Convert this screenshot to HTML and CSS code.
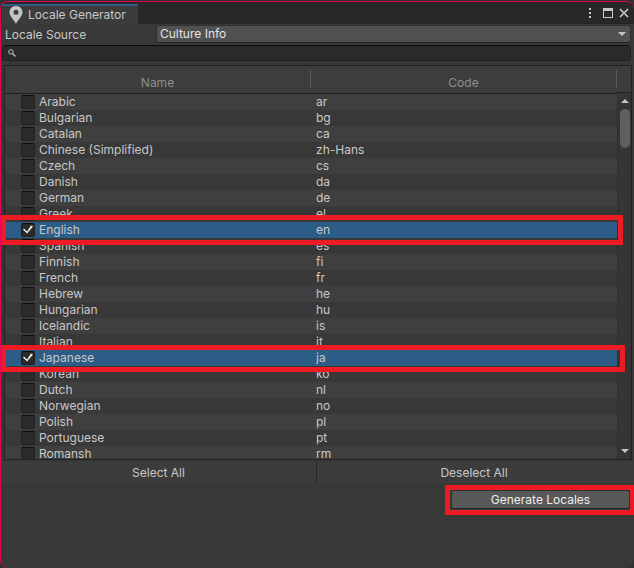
FILE: index.html
```html
<!DOCTYPE html>
<html lang="en">
<head>
<meta charset="utf-8">
<title>Locale Generator</title>
<link rel="stylesheet" href="styles.css">
</head>
<body>
<main class="window">
  <header class="titlebar">
    <h1 class="tab">
      <svg class="pin" width="14" height="18" viewBox="0 0 14 18" aria-hidden="true"><path fill="#c4c4c4" fill-rule="evenodd" d="M7 0C3.200 0 .5 2.800.5 6.300.5 10.500 5 13.500 7 18c2-4.500 6.500-7.500 6.500-11.700C13.500 2.800 10.800 0 7 0zM7 3.800a2.500 2.500 0 1 1 0 5 2.500 2.500 0 0 1 0-5z"/></svg>
      Locale Generator
    </h1>
    <div class="controls">
      <button aria-label="Menu"><svg width="4" height="12" viewBox="0 0 4 12"><path fill="#c8c8c8" d="M1 1h2v2H1zM1 5h2v2H1zM1 9h2v2H1z"/></svg></button>
      <button aria-label="Maximize"><svg width="10" height="10" viewBox="0 0 10 10"><path fill="#c8c8c8" fill-rule="evenodd" d="M0 0h10v10H0zM1 3v6h8V3z"/></svg></button>
      <button aria-label="Close"><svg width="10" height="10" viewBox="0 0 10 10"><path stroke="#c8c8c8" stroke-width="1.700" d="M1 1l8 8M9 1L1 9"/></svg></button>
    </div>
  </header>

  <div class="field">
    <label for="source">Locale Source</label>
    <div class="dropdown">
      <select id="source"><option>Culture Info</option></select>
      <svg class="arrow" width="8" height="4" viewBox="0 0 8 4" aria-hidden="true"><path fill="#c4c4c4" d="M0 0h8L4 4z"/></svg>
    </div>
  </div>

  <div class="search">
    <svg width="8" height="8" viewBox="0 0 8 8" aria-hidden="true"><circle cx="2.900" cy="2.900" r="2.200" fill="none" stroke="#c4c4c4" stroke-width="1"/><path stroke="#c4c4c4" stroke-width="1.300" d="M4.500 4.500L7.500 7.500"/></svg>
    <input type="search" aria-label="Search locales">
  </div>

  <section class="panel">
    <div class="viewport">
      <table>
        <thead><tr><th><span>Name</span></th><th><span>Code</span></th></tr></thead>
        <tbody>
          <tr><td><label><input type="checkbox">Arabic</label></td><td>ar</td></tr>
          <tr><td><label><input type="checkbox">Bulgarian</label></td><td>bg</td></tr>
          <tr><td><label><input type="checkbox">Catalan</label></td><td>ca</td></tr>
          <tr><td><label><input type="checkbox">Chinese (Simplified)</label></td><td>zh-Hans</td></tr>
          <tr><td><label><input type="checkbox">Czech</label></td><td>cs</td></tr>
          <tr><td><label><input type="checkbox">Danish</label></td><td>da</td></tr>
          <tr><td><label><input type="checkbox">German</label></td><td>de</td></tr>
          <tr><td><label><input type="checkbox">Greek</label></td><td>el</td></tr>
          <tr class="selected"><td><label><input type="checkbox" checked>English</label></td><td>en</td></tr>
          <tr><td><label><input type="checkbox">Spanish</label></td><td>es</td></tr>
          <tr><td><label><input type="checkbox">Finnish</label></td><td>fi</td></tr>
          <tr><td><label><input type="checkbox">French</label></td><td>fr</td></tr>
          <tr><td><label><input type="checkbox">Hebrew</label></td><td>he</td></tr>
          <tr><td><label><input type="checkbox">Hungarian</label></td><td>hu</td></tr>
          <tr><td><label><input type="checkbox">Icelandic</label></td><td>is</td></tr>
          <tr><td><label><input type="checkbox">Italian</label></td><td>it</td></tr>
          <tr class="selected"><td><label><input type="checkbox" checked>Japanese</label></td><td>ja</td></tr>
          <tr><td><label><input type="checkbox">Korean</label></td><td>ko</td></tr>
          <tr><td><label><input type="checkbox">Dutch</label></td><td>nl</td></tr>
          <tr><td><label><input type="checkbox">Norwegian</label></td><td>no</td></tr>
          <tr><td><label><input type="checkbox">Polish</label></td><td>pl</td></tr>
          <tr><td><label><input type="checkbox">Portuguese</label></td><td>pt</td></tr>
          <tr><td><label><input type="checkbox">Romansh</label></td><td>rm</td></tr>
        </tbody>
      </table>
    </div>
    <div class="side">
      <div class="corner"></div>
      <div class="scrollbar">
        <svg width="8" height="4" viewBox="0 0 8 4" aria-hidden="true"><path fill="#c4c4c4" d="M0 4h8L4 0z"/></svg>
        <div class="thumb"></div>
        <svg width="8" height="4" viewBox="0 0 8 4" aria-hidden="true"><path fill="#c4c4c4" d="M0 0h8L4 4z"/></svg>
      </div>
    </div>
    <div class="mark mark-english"></div>
    <div class="mark mark-japanese"></div>
  </section>

  <div class="toolbar">
    <button>Select All</button>
    <button>Deselect All</button>
  </div>

  <footer class="actions">
    <div class="callout"><button class="generate">Generate Locales</button></div>
  </footer>
</main>
</body>
</html>
```
FILE: styles.css
```css
* { box-sizing: border-box; }

body {
  margin: 0;
  padding-top: 1px;
  background: #303030;
  color: #c8c8c8;
  font: 12px/16px Inter, "Liberation Sans", sans-serif;
}

button, input, select { font: inherit; color: inherit; }
button { padding: 0; border: 0; background: none; }
svg { display: block; flex: none; }

.window {
  min-height: calc(100vh - 1px);
  overflow: hidden;
  border: 1px solid #e6005c;
  border-right-width: 0;
  border-bottom-width: 0;
  border-radius: 8px;
  background: #383838;
}

.titlebar {
  display: flex;
  justify-content: space-between;
  height: 22px;
  padding: 2px 5px 0 1px;
  border-bottom: 1px solid #232323;
  background: #282828;
}

.tab {
  display: flex;
  align-items: center;
  gap: 5px;
  margin: 0 0 -1px;
  padding: 0 12px 0 7px;
  border-top: 2px solid #2c5d87;
  background: #3c3c3c;
  font-size: 12px;
  font-weight: 400;
}

.controls { display: flex; align-items: center; gap: 11px; padding-bottom: 2px; }
.controls button + button + button { margin-left: -5px; }

.field {
  display: flex;
  align-items: center;
  padding: 1px 3px 0 4px;
}
.field label { width: 151px; flex: none; padding-top: 1px; }

.dropdown { position: relative; flex: 1; }
.dropdown select {
  display: block;
  width: 100%;
  height: 18px;
  padding: 0 3px;
  border: 1px solid #303030;
  border-bottom-color: #242424;
  border-radius: 3px;
  background: #515151;
  color: #e4e4e4;
  appearance: none;
}
.dropdown .arrow { position: absolute; right: 5px; top: 7px; }

.search {
  display: flex;
  align-items: center;
  gap: 5px;
  height: 16px;
  margin: 2px 3px 4px 1px;
  padding: 0 5px;
  border: 1px solid #212121;
  border-top-color: #0d0d0d;
  border-radius: 4px;
  background: #2a2a2a;
}
.search input {
  flex: 1;
  min-width: 0;
  height: 14px;
  padding: 0;
  border: 0;
  outline: 0;
  background: none;
}

.panel {
  position: relative;
  display: flex;
  margin: 0 2px 0 3px;
  border: 1px solid #212121;
  background: #3f3f3f;
}
.viewport { flex: 1; max-height: 393px; overflow: hidden; }

table { width: 100%; border-collapse: collapse; table-layout: fixed; }
th {
  height: 27px;
  padding: 4px 0;
  border-bottom: 1px solid #212121;
  background: #3d3d3d;
  color: #8e8e8e;
  font-weight: 400;
}
th span { display: block; height: 18px; padding-top: 5px; border-right: 1px solid #5c5c5c; }
td { height: 16px; padding: 0 0 0 5px; }
td:first-child { padding-left: 16px; }
td label { display: flex; gap: 4px; height: 16px; }
tbody tr:nth-child(even) { background: #383838; }
tbody tr.selected { background: #2c5d87; }

input[type="checkbox"] {
  width: 14px;
  height: 14px;
  margin: 1px 0 0;
  border: 1px solid #212121;
  border-top-color: #0d0d0d;
  border-radius: 2px;
  background: #2a2a2a;
  appearance: none;
}
input[type="checkbox"]:checked::before {
  content: "";
  display: block;
  width: 12px;
  height: 12px;
  background: #f0f0f0;
  clip-path: polygon(1px 6px, 2px 5px, 5px 8px, 9px 2px, 11px 3px, 5px 10px);
}

.side { display: flex; flex-direction: column; width: 14px; }
.corner { height: 27px; border-bottom: 1px solid #212121; background: #3d3d3d; }
.scrollbar {
  display: flex;
  flex: 1;
  flex-direction: column;
  align-items: center;
  gap: 6px;
  padding: 6px 0;
  border-left: 1px solid #303030;
  background: #353535;
}
.thumb { width: 10px; height: 39px; margin-bottom: auto; border-radius: 5px; background: #5f5f5f; }

.mark { position: absolute; left: -4px; border: 5px solid #ed1c24; }
.mark-english { top: 149px; right: 8px; height: 30px; }
.mark-japanese { top: 279px; right: 6px; height: 27px; }

.toolbar {
  display: grid;
  grid-template-columns: 1fr 1fr;
  margin-top: 2px;
  padding-right: 3px;
  background: #3c3c3c;
}
.toolbar button { height: 21px; }
.toolbar button + button { border-left: 1px solid #282828; }

.actions { display: flex; justify-content: flex-end; padding-top: 2px; }
.callout { padding: 0 0 1px 1px; border: 5px solid #ed1c24; border-right-width: 4px; }
.generate {
  display: block;
  width: 179px;
  height: 19px;
  border: 1px solid #303030;
  border-bottom-color: #242424;
  border-radius: 3px;
  background: #585858;
  color: #eee;
}
```
